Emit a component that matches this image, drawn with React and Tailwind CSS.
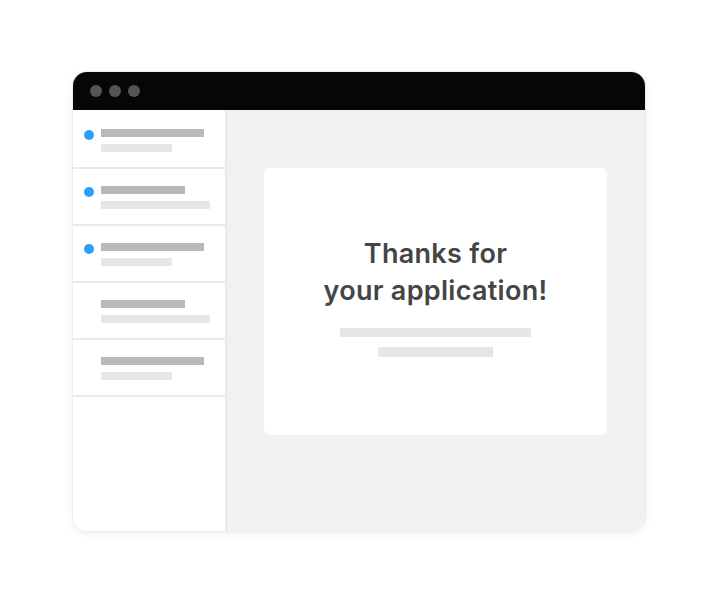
import React from "react";

const rows = [
  { dot: true, a: 103, b: 71 },
  { dot: true, a: 84, b: 109 },
  { dot: true, a: 103, b: 71 },
  { dot: false, a: 84, b: 109 },
  { dot: false, a: 103, b: 71 },
];

function Row({ dot, a, b }) {
  return (
    <div className="h-[57px] border-b-2 border-[#e8e9e9] flex">
      <div className="w-[28px] shrink-0 pl-[11px] pt-[18px]">
        {dot && <div className="w-[10px] h-[10px] rounded-full bg-[#2b9fff]" />}
      </div>
      <div className="flex flex-col pt-[17px] gap-[7px]">
        <div className="h-[8px] bg-[#b9b9b9]" style={{ width: a }} />
        <div className="h-[8px] bg-[#e6e6e6]" style={{ width: b }} />
      </div>
    </div>
  );
}

export default function App() {
  return (
    <div className="w-[718px] h-[603px] bg-white pt-[72px] pl-[73px]">
      <div className="w-[572px] h-[459px] rounded-[14px] overflow-hidden flex flex-col shadow-[0_0_0_1px_#ededed,0_2px_10px_rgba(0,0,0,0.07)]">
        <div className="h-[38px] shrink-0 bg-[#060606] flex items-center pl-[17px] gap-[7px]">
          <div className="w-[12px] h-[12px] rounded-full bg-[#555555]" />
          <div className="w-[12px] h-[12px] rounded-full bg-[#555555]" />
          <div className="w-[12px] h-[12px] rounded-full bg-[#555555]" />
        </div>
        <div className="flex flex-1">
          <div className="w-[154px] shrink-0 bg-white border-r-2 border-[#e8e9e9] pt-[2px]">
            {rows.map((r, i) => (
              <Row key={i} {...r} />
            ))}
          </div>
          <div className="flex-1 bg-[#f0f1f1] pl-[37px] pt-[58px]">
            <div className="w-[343px] h-[267px] bg-white rounded-[6px] flex flex-col items-center pt-[67px]">
              <div
                className="text-[27px] leading-[37px] font-semibold text-[#454545] text-center tracking-[0.3px]"
                style={{ fontFamily: "Inter, 'Liberation Sans', sans-serif" }}
              >
                Thanks for
                <br />
                your application!
              </div>
              <div className="mt-[19px] w-[191px] h-[9px] bg-[#e6e6e6]" />
              <div className="mt-[10px] w-[115px] h-[10px] bg-[#e6e6e6]" />
            </div>
          </div>
        </div>
      </div>
    </div>
  );
}
